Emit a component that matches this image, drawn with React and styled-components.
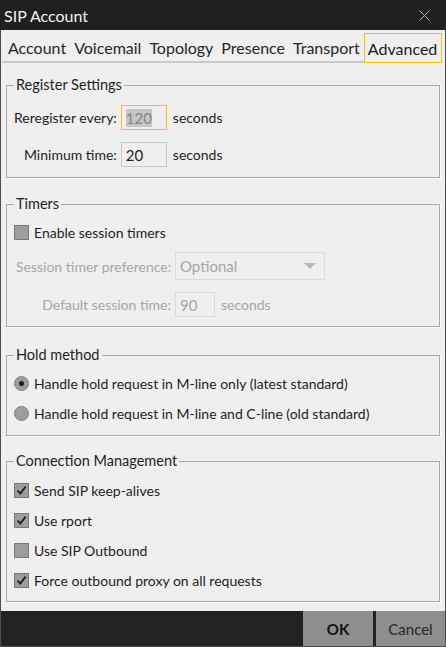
import React from 'react';
import styled, { createGlobalStyle } from 'styled-components';

const GlobalStyle = createGlobalStyle`
  html, body {
    margin: 0;
    padding: 0;
    height: 100%;
  }
  body {
    font-family: Lato, "Noto Sans", sans-serif;
    background: #efefef;
  }
  #root {
    height: 100%;
  }
`;

const tabs = ['Account', 'Voicemail', 'Topology', 'Presence', 'Transport', 'Advanced'];

const CheckMark = () => (
    <svg width="15" height="15" viewBox="0 0 15 15">
        <path d="M3.5 7.5 L6.3 10.6 L11.6 3.6" fill="none" stroke="#1e1e1e" strokeWidth="1.8" />
    </svg>
);

const Check = ({ checked, children }) => (
    <OptionRow>
        <Box>{checked && <CheckMark />}</Box>
        <span>{children}</span>
    </OptionRow>
);

const Radio = ({ selected, children }) => (
    <OptionRow>
        <Round $selected={selected} />
        <span>{children}</span>
    </OptionRow>
);

const App = () => {
    return (
        <>
            <GlobalStyle />
            <Window>
                <TitleBar>
                    <span>SIP Account</span>
                    <svg width="11" height="11" viewBox="0 0 11 11">
                        <path d="M0.5 0.5 L10.5 10.5 M10.5 0.5 L0.5 10.5" stroke="#b4b4b4" strokeWidth="1" />
                    </svg>
                </TitleBar>

                <TabBar>
                    {tabs.map((t) => (
                        <Tab key={t} $active={t === 'Advanced'}>{t}</Tab>
                    ))}
                </TabBar>

                <Body>
                    <GroupBox $pad="10px 7px 10px">
                        <Legend>Register Settings</Legend>
                        <FormGrid>
                            <Label>Reregister every:</Label>
                            <Field $w={46} $focus><Selected>120</Selected></Field>
                            <Unit>seconds</Unit>

                            <Label>Minimum time:</Label>
                            <Field $w={46}>20</Field>
                            <Unit>seconds</Unit>
                        </FormGrid>
                    </GroupBox>

                    <GroupBox $pad="6px 7px 9px" $mt={1}>
                        <Legend>Timers</Legend>
                        <Check>Enable session timers</Check>
                        <TimerRow $top={8}>
                            <Label $w={155}>Session timer preference:</Label>
                            <Select>
                                <span>Optional</span>
                                <Arrow />
                            </Select>
                        </TimerRow>
                        <TimerRow $top={12}>
                            <Label $w={155}>Default session time:</Label>
                            <Field $w={40} $disabled>90</Field>
                            <Unit $disabled>seconds</Unit>
                        </TimerRow>
                    </GroupBox>

                    <GroupBox $pad="6px 7px 10px" $mt={3}>
                        <Legend>Hold method</Legend>
                        <Stack>
                            <Radio selected>Handle hold request in M-line only (latest standard)</Radio>
                            <Radio>Handle hold request in M-line and C-line (old standard)</Radio>
                        </Stack>
                    </GroupBox>

                    <GroupBox $pad="7px 7px 9px">
                        <Legend>Connection Management</Legend>
                        <Stack>
                            <Check checked>Send SIP keep-alives</Check>
                            <Check checked>Use rport</Check>
                            <Check>Use SIP Outbound</Check>
                            <Check checked>Force outbound proxy on all requests</Check>
                        </Stack>
                    </GroupBox>
                </Body>

                <Footer>
                    <FooterButton $primary $w={70}>OK</FooterButton>
                    <FooterButton $w={69}>Cancel</FooterButton>
                </Footer>
            </Window>
        </>
    );
};

const Window = styled.div`
    display: flex;
    flex-direction: column;
    height: 647px;
    box-sizing: border-box;
    border: 1px solid #4c4c4c;
    border-top: none;
    background: #efefef;
    color: #1e1e1e;
    font-size: 14px;
`;

const TitleBar = styled.div`
    display: flex;
    align-items: center;
    justify-content: space-between;
    height: 30px;
    padding: 0 16px 0 4px;
    background: #202020;
    color: #f2f2f2;
    font-size: 16px;
    margin: 0 -1px;
`;

const TabBar = styled.div`
    display: flex;
    height: 33px;
    box-sizing: border-box;
    padding: 3px 0 0 1px;
    font-size: 16px;
`;

const Tab = styled.div`
    display: flex;
    align-items: center;
    padding: 0 4px;
    color: #262626;
    border-bottom: 2px solid #c9c9c9;

    &:first-child {
        padding-left: 6px;
    }

    ${(p) => p.$active && `
        border: 1px solid #f2c40c;
        padding: 0 4px 0 3px;
        color: #1a1a1a;
    `}
`;

const Body = styled.div`
    flex: 1;
    display: flex;
    flex-direction: column;
    gap: 15px;
    padding: 12px 5px 0;
`;

const GroupBox = styled.fieldset`
    margin: ${(p) => p.$mt || 0}px 0 0;
    padding: ${(p) => p.$pad};
    border: 1px solid #a9a9a9;
    box-shadow: 1px 1px 0 #fbfbfb;
    min-width: 0;
`;

const Legend = styled.legend`
    padding: 0 2px;
    line-height: 20px;
    font-size: 14.5px;
    color: #1e1e1e;
`;

const FormGrid = styled.div`
    display: grid;
    grid-template-columns: max-content max-content max-content;
    column-gap: 4px;
    row-gap: 12px;
    align-items: center;
`;

const TimerRow = styled.div`
    display: flex;
    align-items: center;
    gap: 4px;
    margin-top: ${(p) => p.$top}px;
    padding-left: 2px;
    color: #a6a6a6;
`;

const Label = styled.div`
    flex: none;
    white-space: nowrap;
    text-align: right;
    ${(p) => p.$w && `width: ${p.$w}px;`}
`;

const Unit = styled.div`
    padding-left: 2px;
    color: ${(p) => (p.$disabled ? '#a6a6a6' : 'inherit')};
`;

const Field = styled.div`
    flex: none;
    display: flex;
    align-items: center;
    box-sizing: border-box;
    width: ${(p) => p.$w}px;
    height: 25px;
    padding: 0 4px;
    border: 1px solid ${(p) => (p.$focus ? '#f2c40c' : p.$disabled ? '#dadada' : '#c8c8c8')};
    color: ${(p) => (p.$disabled ? '#a6a6a6' : '#1e1e1e')};
    font-size: 15px;
`;

const Selected = styled.span`
    background: #c6c6c6;
    color: #858585;
    line-height: 18px;
`;

const Select = styled.div`
    flex: none;
    display: flex;
    align-items: center;
    justify-content: space-between;
    box-sizing: border-box;
    width: 150px;
    height: 28px;
    padding: 0 8px 0 4px;
    border: 1px solid #dcdcdc;
    color: #a6a6a6;
    font-size: 15px;
`;

const Arrow = styled.div`
    width: 0;
    height: 0;
    border-left: 6px solid transparent;
    border-right: 6px solid transparent;
    border-top: 6px solid #b9b9b9;
`;

const Stack = styled.div`
    display: flex;
    flex-direction: column;
    gap: 6px;
`;

const OptionRow = styled.div`
    display: flex;
    align-items: center;
    gap: 5px;
    height: 24px;
    color: #1e1e1e;
`;

const Box = styled.div`
    width: 15px;
    height: 15px;
    box-sizing: border-box;
    border: 1px solid #787878;
    background: #9d9d9d;
    display: flex;
    align-items: center;
    justify-content: center;

    svg {
        margin: -1px;
    }
`;

const Round = styled.div`
    position: relative;
    width: 15px;
    height: 15px;
    box-sizing: border-box;
    border-radius: 50%;
    border: 1px solid #828282;
    background: #9d9d9d;

    &::after {
        content: '';
        display: ${(p) => (p.$selected ? 'block' : 'none')};
        position: absolute;
        left: 4px;
        top: 4px;
        width: 5px;
        height: 5px;
        border-radius: 50%;
        background: #1e1e1e;
    }
`;

const Footer = styled.div`
    display: flex;
    justify-content: flex-end;
    gap: 3px;
    height: 35px;
    background: #222222;
`;

const FooterButton = styled.button`
    width: ${(p) => p.$w}px;
    border: none;
    padding: 0;
    background: #8e8e8e;
    font-family: inherit;
    font-size: 15px;
    font-weight: ${(p) => (p.$primary ? 700 : 400)};
    color: ${(p) => (p.$primary ? '#111' : '#262626')};
`;

export default App;
